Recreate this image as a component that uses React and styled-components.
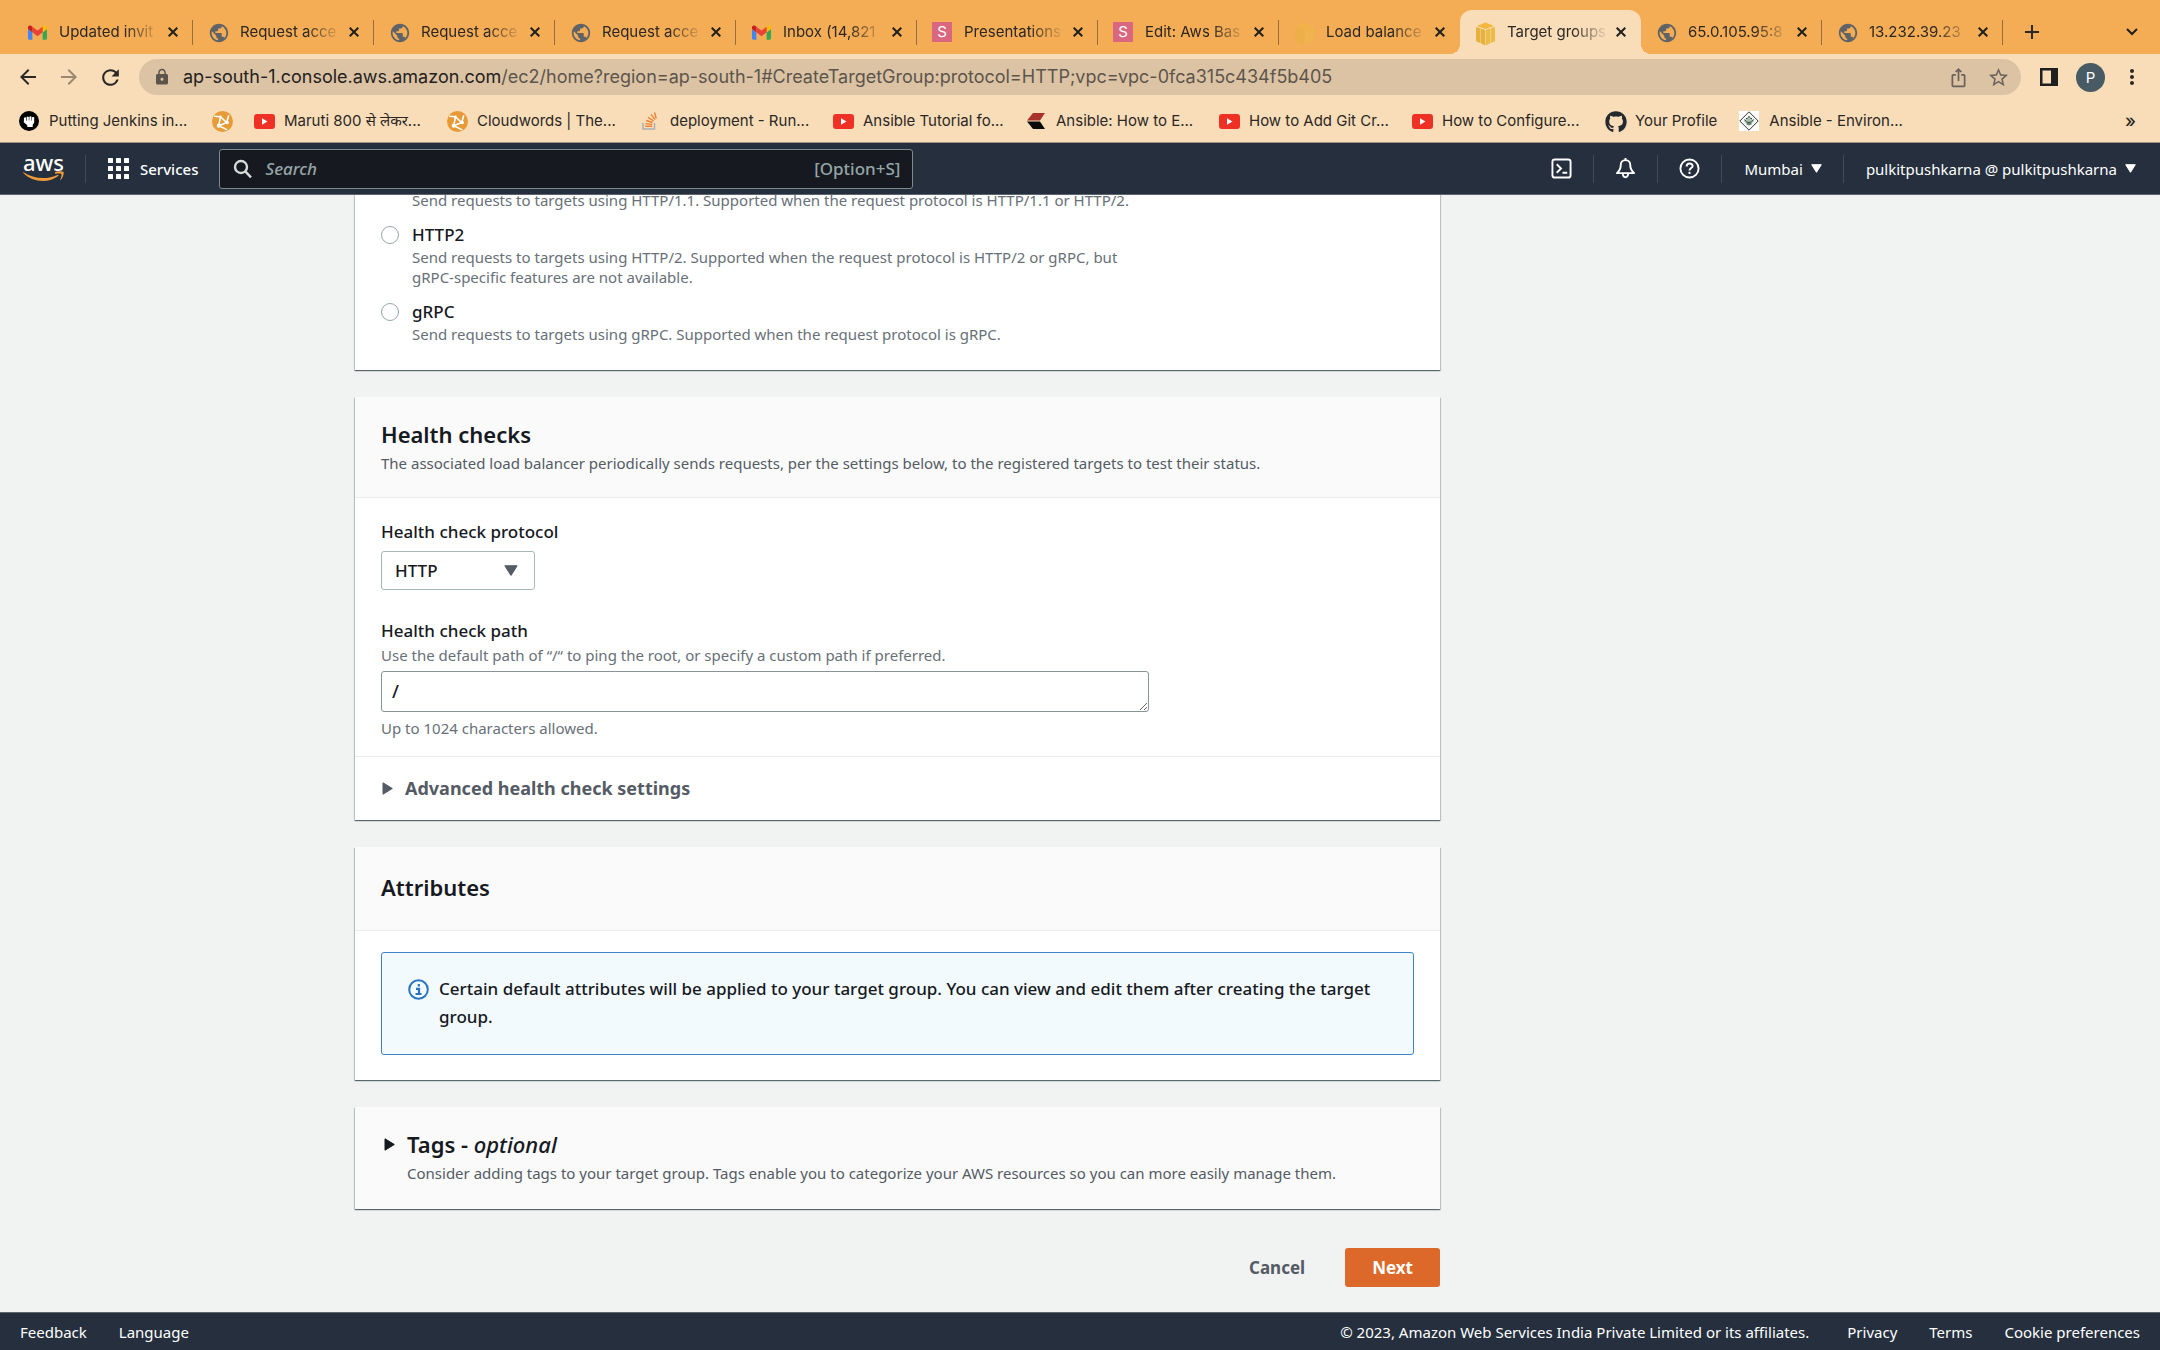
import React from 'react';
import styled, { createGlobalStyle, css } from 'styled-components';
import {
  MdPublic, MdLock, MdArrowBack, MdArrowForward, MdRefresh, MdIosShare,
  MdStarBorder, MdMoreVert, MdAdd,
} from 'react-icons/md';
import { FaGithub } from 'react-icons/fa';

const ember = '"Noto Sans", "Open Sans", "Liberation Sans", sans-serif';
const system = 'Inter, Roboto, "Noto Sans", "Liberation Sans", sans-serif';

const color = {
  strip: '#f5ad55',
  toolbar: '#f9ddb9',
  omnibox: '#dbc3a4',
  chromeText: '#2b2724',
  squid: '#252f3e',
  ink: '#16191f',
  secondary: '#545b64',
  muted: '#687078',
  page: '#f1f3f3',
  line: '#eaeded',
  orange: '#dc6829',
  info: '#2a74bf',
};

const GlobalStyle = createGlobalStyle`
  *, *::before, *::after { box-sizing: border-box; }
  body { margin: 0; }
  button, input, select, textarea { font: inherit; color: inherit; }
  button { border: 0; padding: 0; background: none; cursor: pointer; }
  h2, p { margin: 0; }
`;

const Screen = styled.div`
  display: flex;
  flex-direction: column;
  height: 100vh;
  overflow: hidden;
  font-family: ${ember};
  color: ${color.ink};
`;

/* ---------- Browser chrome ---------- */

const TabStrip = styled.div`
  display: flex;
  align-items: flex-end;
  height: 54px;
  padding: 10px 14px 0 12px;
  background: ${color.strip};
  font: 400 15px/20px ${system};
  color: ${color.chromeText};
`;

const TabItem = styled.div`
  position: relative;
  display: flex;
  align-items: center;
  flex: 0 1 181px;
  min-width: 0;
  height: 44px;
  padding: 0 12px 0 15px;
  gap: 5px;
  ${(p) => p.$divider && css`
    &::after {
      content: '';
      position: absolute;
      right: 0;
      top: 10px;
      width: 1px;
      height: 25px;
      background: #94703f;
    }
  `}
  ${(p) => p.$active && css`
    border-radius: 12px 12px 0 0;
    background: ${color.toolbar};
    &::before, &::after {
      content: '';
      position: absolute;
      bottom: 0;
      width: 10px;
      height: 10px;
    }
    &::before {
      left: -10px;
      background: radial-gradient(circle at 0 0, transparent 10px, ${color.toolbar} 10px);
    }
    &::after {
      right: -10px;
      background: radial-gradient(circle at 100% 0, transparent 10px, ${color.toolbar} 10px);
    }
  `}
`;

const TabTitle = styled.button`
  flex: 1;
  min-width: 0;
  padding-left: 7px;
  overflow: hidden;
  white-space: nowrap;
  text-align: left;
  mask-image: linear-gradient(90deg, #000 68%, transparent 100%);
`;

const IconButton = styled.button`
  display: grid;
  place-items: center;
  flex: none;
  width: ${(p) => p.$size || 28}px;
  height: ${(p) => p.$size || 28}px;
  color: ${(p) => p.$color || color.chromeText};
  font-size: ${(p) => p.$glyph || 24}px;
`;

const FavIcon = styled.span`
  display: grid;
  place-items: center;
  flex: none;
  width: 20px;
  height: 20px;
  font-size: 22px;
  color: ${(p) => p.$color || '#5f6368'};
`;

const LetterIcon = styled.span`
  display: grid;
  place-items: center;
  width: 20px;
  height: 20px;
  background: #d8677f;
  color: #fff;
  font-size: 15px;
`;

const NewTab = styled(IconButton)`
  align-self: center;
  margin-left: 15px;
`;

const TabSearch = styled(IconButton)`
  align-self: center;
  margin-left: auto;
`;

const Toolbar = styled.div`
  display: flex;
  align-items: center;
  height: 46px;
  padding: 0 14px;
  gap: 13px;
  background: ${color.toolbar};
  color: ${color.chromeText};
`;

const Omnibox = styled.div`
  display: flex;
  align-items: center;
  flex: 1;
  min-width: 0;
  height: 36px;
  margin: 0 1px 0 2px;
  padding: 0 9px 0 14px;
  border-radius: 18px;
  background: ${color.omnibox};
  gap: 12px;
  color: #5d554c;
  font: 400 18px/24px ${system};
`;

const Address = styled.div`
  flex: 1;
  min-width: 0;
  overflow: hidden;
  white-space: nowrap;
  strong { font-weight: 400; color: #24211e; }
`;

const Avatar = styled.button`
  width: 29px;
  height: 29px;
  border-radius: 50%;
  background: #485a64;
  color: #fff;
  font: 400 15px/29px ${system};
`;

const Bookmarks = styled.nav`
  display: flex;
  align-items: center;
  height: 43px;
  padding: 0 24px 0 19px;
  gap: 22px;
  background: ${color.toolbar};
  border-bottom: 1px solid #a3937d;
  font: 400 15px/20px ${system};
  color: ${color.chromeText};
`;

const Bookmark = styled.a`
  display: flex;
  align-items: center;
  gap: 10px;
  flex: none;
  color: inherit;
  text-decoration: none;
  white-space: nowrap;
`;

const BookmarkTitle = styled.span`
  width: ${(p) => (p.$short ? 'auto' : '141px')};
`;

const More = styled.button`
  margin-left: auto;
  font-size: 18px;
  font-weight: 500;
  line-height: 20px;
`;

/* ---------- Console header ---------- */

const Header = styled.header`
  display: flex;
  align-items: center;
  flex: none;
  height: 52px;
  padding: 0 24px 0 23px;
  background: ${color.squid};
  border-bottom: 1px solid #5b646f;
  color: #fff;
  font-size: 15px;
  line-height: 20px;
`;

const Logo = styled.a`
  display: flex;
  flex-direction: column;
  align-items: center;
  width: 41px;
  margin-right: 21px;
  padding-bottom: 3px;
  color: #fff;
  text-decoration: none;
  font: 500 22px/18px ${ember};
  svg { display: block; }
`;

const Rule = styled.span`
  flex: none;
  width: 1px;
  height: 28px;
  background: #414b58;
`;

const ServicesButton = styled.button`
  display: flex;
  align-items: center;
  gap: 11px;
  margin: 0 21px 0 22px;
  font-weight: 500;
`;

const SearchBox = styled.label`
  display: flex;
  align-items: center;
  flex: 0 1 694px;
  height: 40px;
  padding: 0 12px 0 13px;
  gap: 12px;
  border: 1px solid #7d8a8c;
  border-radius: 3px;
  background: ${color.ink};
  color: #95a5a6;
  font-size: 17px;
  font-weight: 500;
  line-height: 24px;
`;

const SearchInput = styled.input`
  flex: 1;
  min-width: 0;
  padding: 0;
  border: 0;
  outline: 0;
  background: none;
  color: #fff;
  &::placeholder { color: #95a5a6; font-style: italic; opacity: 1; }
`;

const HeaderTools = styled.div`
  display: flex;
  align-items: center;
  margin-left: auto;
`;

const ToolButton = styled.button`
  display: flex;
  align-items: center;
  justify-content: center;
  gap: 8px;
  padding: 0 21px 0 22px;
  white-space: nowrap;
  &:last-child { padding-right: 0; }
  &[aria-label] { padding: 0 21px; }
`;

/* ---------- Page ---------- */

const Main = styled.main`
  display: grid;
  grid-template-columns: minmax(24px, 355fr) minmax(0, 1085px) minmax(24px, 720fr);
  flex: 1;
  align-content: end;
  min-height: 0;
  overflow: hidden;
  padding-bottom: 25px;
  background: ${color.page};
`;

const Column = styled.div`
  grid-column: 2;
  display: flex;
  flex-direction: column;
  gap: 27px;
`;

const Card = styled.section`
  background: #fff;
  box-shadow: 0 1px 1px 0 rgba(0, 28, 36, 0.5), 1px 1px 1px 0 rgba(0, 28, 36, 0.15),
    -1px 1px 1px 0 rgba(0, 28, 36, 0.15);
`;

const CardHeader = styled.div`
  padding: ${(p) => (p.$roomy ? '25px 26px 28px' : '22px 26px 24px')};
  background: #fafafa;
  border-bottom: 1px solid ${color.line};
`;

const Title = styled.h2`
  font-size: 22px;
  font-weight: 650;
  line-height: 30px;
  em { font-weight: 500; }
`;

const Subtitle = styled.p`
  margin-top: 4px;
  padding-left: ${(p) => (p.$indent ? '26px' : '0')};
  font-size: 15px;
  line-height: 20px;
  color: ${color.secondary};
`;

const CardBody = styled.div`
  display: flex;
  flex-direction: column;
  gap: ${(p) => p.$gap || 0}px;
  padding: ${(p) => p.$pad};
`;

const Option = styled.div`
  display: grid;
  grid-template-columns: 18px minmax(0, 720px);
  column-gap: 13px;
`;

const Radio = styled.input`
  appearance: none;
  width: 18px;
  height: 18px;
  margin: 3px 0 0;
  border: 1px solid #95a5a6;
  border-radius: 50%;
  background: #fff;
`;

const Label = styled.label`
  font-size: 17px;
  font-weight: 500;
  line-height: 24px;
`;

const Hint = styled.p`
  grid-column: 2;
  font-size: 15px;
  line-height: 20px;
  color: ${color.muted};
`;

const Field = styled.div`
  display: flex;
  flex-direction: column;
  align-items: flex-start;
  gap: ${(p) => p.$gap}px;
`;

const FieldHead = styled.div`
  display: flex;
  flex-direction: column;
  gap: 2px;
`;

const SelectWrap = styled.div`
  display: grid;
  align-items: center;
  svg { grid-area: 1 / 1; justify-self: end; margin-right: 17px; pointer-events: none; }
`;

const Select = styled.select`
  grid-area: 1 / 1;
  appearance: none;
  width: 154px;
  height: 39px;
  padding: 0 13px;
  border: 1px solid #aab7b8;
  border-radius: 3px;
  background: #fff;
  font-size: 17px;
  font-weight: 500;
  line-height: 24px;
`;

const PathBox = styled.textarea`
  display: block;
  width: 768px;
  max-width: 100%;
  height: 41px;
  padding: 7px 10px;
  border: 1px solid #879596;
  border-radius: 3px;
  background: #fff;
  font-size: 18px;
  font-weight: 500;
  line-height: 24px;
`;

const Expander = styled.button`
  display: flex;
  align-items: center;
  gap: 12px;
  width: 100%;
  padding: 19px 27px 20px;
  border-top: 1px solid ${color.line};
  color: ${color.secondary};
  font-size: 18px;
  font-weight: 700;
  line-height: 24px;
`;

const TitleToggle = styled.button`
  display: flex;
  align-items: center;
  gap: 12px;
  padding-left: 3px;
`;

const TagsHeader = styled.div`
  padding: 22px 26px;
  padding-bottom: 26px;
  background: #fafafa;
`;

const Alert = styled.div`
  display: flex;
  gap: 10px;
  padding: 22px 26px 23px;
  border: 1px solid #3d83c5;
  border-radius: 3px;
  background: #f2fafd;
  font-size: 17px;
  font-weight: 500;
  line-height: 28px;
  svg { flex: none; margin-top: 4px; }
`;

const Actions = styled.div`
  display: flex;
  justify-content: flex-end;
  gap: 13px;
  padding-top: 12px;
  font-size: 17px;
  font-weight: 700;
  line-height: 24px;
`;

const Action = styled.button`
  height: 39px;
  padding: 0 27px;
  border-radius: 3px;
  background: ${(p) => (p.$primary ? color.orange : 'transparent')};
  color: ${(p) => (p.$primary ? '#fff' : color.secondary)};
`;

const Footer = styled.footer`
  display: flex;
  align-items: center;
  flex: none;
  height: 38px;
  padding: 0 20px;
  gap: 32px;
  background: ${color.squid};
  border-top: 1px solid #5b6668;
  color: #fff;
  font-size: 15px;
  line-height: 20px;
  white-space: nowrap;
  a { color: inherit; text-decoration: none; }
`;

const Copyright = styled.span`
  margin: 0 6px 0 auto;
`;

/* ---------- Drawings ---------- */

const Gmail = () => (
  <svg width="19" height="15" viewBox="0 0 24 18">
    <path fill="#4285f4" d="M1.6 18H5.5V8.7L0 4.5v11.900C0 17.300 .7 18 1.600 18z" />
    <path fill="#34a853" d="M18.500 18h3.900c.9 0 1.600-.7 1.600-1.600V4.500l-5.500 4.200z" />
    <path fill="#fbbc04" d="M18.500 1.700v7L24 4.500V2.400C24 .4 21.700-.7 20 .5z" />
    <path fill="#ea4335" d="M5.500 8.700v-7L12 6.600l6.500-4.900v7L12 13.600z" />
    <path fill="#c5221f" d="M0 2.400v2.100l5.500 4.200v-7L4 .5C2.300-.7 0 .4 0 2.400z" />
  </svg>
);

const Cube = ({ faded }) => (
  <svg width="19" height="24" viewBox="0 0 20 24" opacity={faded ? 0.5 : 1}>
    <path fill="#f2b73c" d="M10 0l9 3.500-9 3.200L1 3.500z" />
    <path fill="#e6b13c" d="M0 4.500l4.500 1.400V21.500L0 19.500zM5 6.100l4.700 1.700V24L5 21.700z" />
    <path fill="#ecbb48" d="M20 4.500l-4.500 1.400V21.500l4.500-2zM15 6.100l-4.700 1.700V24l4.700-2.300z" />
  </svg>
);

const Cross = () => (
  <svg width="10" height="10" viewBox="0 0 10 10" stroke="#1f1f1f" strokeWidth="2">
    <path d="M.7.7l8.600 8.600M9.300.7L.7 9.300" />
  </svg>
);

const Fist = () => (
  <svg width="20" height="20" viewBox="0 0 20 20">
    <circle cx="10" cy="10" r="10" fill="#000" />
    <path fill="#fff" d="M5 6.800q1-1 2-.3V9.700h.6V5.900q1.100-.9 2.200 0v3.700h.5V5.800q1.100-.9 2.200 0v3.900h.5V6.300q1.100-.7 2.200 0v5.200l-1.500 2.500V16H8.300v-1.800L4.800 11.300z" />
  </svg>
);

const Network = () => (
  <svg width="21" height="21" viewBox="0 0 20 20">
    <circle cx="10" cy="10" r="10" fill="#e79a35" />
    <g stroke="#fff" strokeWidth="1.500" fill="none">
      <path d="M2 5l6 .5L14 11l2-7M8 5.500L6.500 14 14 11M6.500 14l8 4" />
    </g>
    <circle cx="6.500" cy="14" r="2" fill="#fff" />
    <circle cx="14.500" cy="11" r="1.600" fill="#fff" />
    <circle cx="8" cy="5.500" r="1.300" fill="#fff" />
  </svg>
);

const Youtube = () => (
  <svg width="21" height="15" viewBox="0 0 21 15">
    <rect width="21" height="15" rx="3" fill="#ee3124" />
    <path fill="#fff" d="M8 4.300v6.400l5.500-3.200z" />
  </svg>
);

const Stack = () => (
  <svg width="16" height="18" viewBox="0 0 16 18">
    <path d="M1 11v6h11.500v-6" fill="none" stroke="#a9b0b5" strokeWidth="1.500" />
    <path d="M3.200 14.300h7M3.400 11.600l6.900.8M4.200 8.500l6.500 2M6 5.300l5.600 3.700M9 2.400l4 5.300M12.600.5l1.600 6" stroke="#ef8236" strokeWidth="1.400" />
  </svg>
);

const Ribbon = () => (
  <svg width="18" height="18" viewBox="0 0 18 18">
    <path fill="#a8322c" d="M6 1h12l-5 7.500H0z" />
    <path fill="#0a0a0a" d="M0 9.500h13L18 17H6z" />
  </svg>
);

const Diamond = () => (
  <svg width="20" height="20" viewBox="0 0 20 20">
    <rect width="20" height="20" fill="#fff" />
    <path d="M10 .8L19.200 10 10 19.200.8 10z" fill="#f4f7f5" stroke="#333" />
    <path d="M10 5L15 10 10 15 5 10z" fill="#a9c0b0" />
    <path d="M5.500 8.500c2 4 7 4 9 0M7 7.500h1.500M11.500 7.500h1.500M7.500 13h5M10 5v2" stroke="#2c4a38" fill="none" />
  </svg>
);

const Smile = () => (
  <svg width="41" height="10" viewBox="0 0 41 10">
    <path fill="#f19b38" d="M.4 1.200C6 4.900 13 7 20 7c5.200 0 10.300-1.200 14.500-3.100.8-.3 1.400.5.7 1.100C31.200 8 25.600 10 20 10 12.400 10 5.400 7.100.2 2c-.4-.4 0-1 .2-.8z" />
    <path fill="#f19b38" d="M32 1.200C34.500-.2 40 .4 40.500 1.100c.6.700-.1 5.400-2.600 7.600-.5.4-.8.2-.6-.3.600-1.400 1.700-4.700 1.100-5.500-.6-.7-4.100-.3-5.700-.2-.7.100-.9-.4-.7-.5z" />
  </svg>
);

const Waffle = () => (
  <svg width="21" height="21" viewBox="0 0 21 21" fill="#fff">
    {[0, 8, 16].map((y) => [0, 8, 16].map((x) => (
      <rect key={`${x}-${y}`} x={x} y={y} width="5" height="5" rx=".5" />
    )))}
  </svg>
);

const Magnifier = () => (
  <svg width="20" height="20" viewBox="0 0 20 20" fill="none" stroke="#d5dbdb" strokeWidth="2.400">
    <circle cx="8" cy="8" r="6" />
    <path d="M12.300 12.300L18 18.300" />
  </svg>
);

const Caret = ({ width = 11, height = 9, fill = '#fff' }) => (
  <svg width={width} height={height} viewBox="0 0 11 9">
    <path fill={fill} stroke={fill} strokeLinejoin="round" d="M.7.7h9.600L5.500 8.300z" />
  </svg>
);

const RightCaret = () => (
  <svg width="11" height="13" viewBox="0 0 11 13">
    <path fill="currentColor" stroke="currentColor" strokeLinejoin="round" d="M1 .8L10.300 6.500 1 12.200z" />
  </svg>
);

const Shell = () => (
  <svg width="21" height="21" viewBox="0 0 22 22" fill="none" stroke="#fff" strokeWidth="2">
    <rect x="1.500" y="1.500" width="19" height="19" rx="2.500" />
    <path d="M6 6.500l4.500 4.500L6 15.500M12 15.500h5" />
  </svg>
);

const Bell = () => (
  <svg width="21" height="21" viewBox="0 0 22 22" fill="none" stroke="#fff" strokeWidth="2">
    <path d="M11 2.200c-3.400 0-5 2.600-5 5.300 0 4-1.500 6-4 8.300h18c-2.500-2.300-4-4.300-4-8.300 0-2.700-1.600-5.300-5-5.300zM8.200 16c0 5.500 5.600 5.500 5.600 0M11 0v2.500" strokeLinejoin="round" />
  </svg>
);

const Help = () => (
  <svg width="21" height="21" viewBox="0 0 22 22" fill="none" stroke="#fff" strokeWidth="2">
    <circle cx="11" cy="11" r="9.500" />
    <path d="M8 9c0-4.400 6.300-4 6.300-.7 0 2.200-3.300 2.400-3.300 4.900M11 14.500v2.200" />
  </svg>
);

const Info = () => (
  <svg width="21" height="21" viewBox="0 0 21 21" fill="none" stroke={color.info} strokeWidth="2">
    <circle cx="10.500" cy="10.500" r="9.300" />
    <path d="M10.800 5v2.500M8 9.800h3v5M7.500 15h6" strokeWidth="2.200" />
  </svg>
);

const Panel = () => (
  <svg width="18" height="18" viewBox="0 0 18 18">
    <path fill="#1f1f1f" fillRule="evenodd" d="M0 0h18v18H0zM2.500 2.500v13h8.500v-13z" />
  </svg>
);

const Chevron = () => (
  <svg width="12" height="8" viewBox="0 0 12 8" fill="none" stroke="#1f1f1f" strokeWidth="2">
    <path d="M1 1l5 5 5-5" />
  </svg>
);

/* ---------- Data ---------- */

const globe = <MdPublic />;
const tabs = [
  { title: 'Updated invit', icon: <Gmail />, divider: true },
  { title: 'Request acce', icon: globe, divider: true },
  { title: 'Request acce', icon: globe, divider: true },
  { title: 'Request acce', icon: globe, divider: true },
  { title: 'Inbox (14,821', icon: <Gmail />, divider: true },
  { title: 'Presentations', icon: <LetterIcon>S</LetterIcon>, divider: true },
  { title: 'Edit: Aws Bas', icon: <LetterIcon>S</LetterIcon>, divider: true },
  { title: 'Load balance', icon: <Cube faded /> },
  { title: 'Target groups', icon: <Cube />, active: true },
  { title: '65.0.105.95:8', icon: globe, divider: true },
  { title: '13.232.39.23', icon: globe, divider: true },
];

const bookmarks = [
  { title: 'Putting Jenkins in...', icon: <Fist /> },
  { icon: <Network /> },
  { title: 'Maruti 800 से लेकर...', icon: <Youtube /> },
  { title: 'Cloudwords | The...', icon: <Network /> },
  { title: 'deployment - Run...', icon: <Stack /> },
  { title: 'Ansible Tutorial fo...', icon: <Youtube /> },
  { title: 'Ansible: How to E...', icon: <Ribbon /> },
  { title: 'How to Add Git Cr...', icon: <Youtube /> },
  { title: 'How to Configure...', icon: <Youtube /> },
  { title: 'Your Profile', icon: <FaGithub />, short: true },
  { title: 'Ansible - Environ...', icon: <Diamond /> },
];

function BrowserChrome() {
  return (
    <>
      <TabStrip>
        {tabs.map((t, i) => (
          <TabItem key={i} $active={t.active} $divider={t.divider}>
            <FavIcon>{t.icon}</FavIcon>
            <TabTitle>{t.title}</TabTitle>
            <IconButton $size={16} aria-label="Close tab"><Cross /></IconButton>
          </TabItem>
        ))}
        <NewTab aria-label="New tab"><MdAdd /></NewTab>
        <TabSearch aria-label="Search tabs"><Chevron /></TabSearch>
      </TabStrip>
      <Toolbar>
        <IconButton aria-label="Back"><MdArrowBack /></IconButton>
        <IconButton $color="#9a8970" aria-label="Forward"><MdArrowForward /></IconButton>
        <IconButton $glyph={25} aria-label="Reload"><MdRefresh /></IconButton>
        <Omnibox>
          <MdLock />
          <Address role="textbox" aria-label="Address">
            <strong>ap-south-1.console.aws.amazon.com</strong>
            /ec2/home?region=ap-south-1#CreateTargetGroup:protocol=HTTP;vpc=vpc-0fca315c434f5b405
          </Address>
          <IconButton $glyph={21} $color="#6b6259" aria-label="Share"><MdIosShare /></IconButton>
          <IconButton $glyph={23} $color="#6b6259" aria-label="Bookmark"><MdStarBorder /></IconButton>
        </Omnibox>
        <IconButton aria-label="Side panel"><Panel /></IconButton>
        <Avatar>P</Avatar>
        <IconButton aria-label="Menu"><MdMoreVert /></IconButton>
      </Toolbar>
      <Bookmarks>
        {bookmarks.map((b, i) => (
          <Bookmark key={i} href="#">
            <FavIcon $color="#24292e">{b.icon}</FavIcon>
            {b.title && <BookmarkTitle $short={b.short}>{b.title}</BookmarkTitle>}
          </Bookmark>
        ))}
        <More>»</More>
      </Bookmarks>
    </>
  );
}

function ConsoleHeader() {
  return (
    <Header>
      <Logo href="#">aws<Smile /></Logo>
      <Rule />
      <ServicesButton><Waffle />Services</ServicesButton>
      <SearchBox>
        <Magnifier />
        <SearchInput type="text" placeholder="Search" aria-label="Search" />
        <span>[Option+S]</span>
      </SearchBox>
      <HeaderTools>
        <ToolButton aria-label="CloudShell"><Shell /></ToolButton>
        <Rule />
        <ToolButton aria-label="Notifications"><Bell /></ToolButton>
        <Rule />
        <ToolButton aria-label="Help"><Help /></ToolButton>
        <Rule />
        <ToolButton>Mumbai<Caret /></ToolButton>
        <Rule />
        <ToolButton>pulkitpushkarna @ pulkitpushkarna<Caret /></ToolButton>
      </HeaderTools>
    </Header>
  );
}

export default function App() {
  return (
    <Screen>
      <GlobalStyle />
      <BrowserChrome />
      <ConsoleHeader />
      <Main>
        <Column>
          <Card>
            <CardBody $gap={13} $pad="0 26px 26px">
              <Option>
                <Hint>Send requests to targets using HTTP/1.1. Supported when the request protocol is HTTP/1.1 or HTTP/2.</Hint>
              </Option>
              <Option>
                <Radio type="radio" name="version" id="http2" />
                <Label htmlFor="http2">HTTP2</Label>
                <Hint>Send requests to targets using HTTP/2. Supported when the request protocol is HTTP/2 or gRPC, but gRPC-specific features are not available.</Hint>
              </Option>
              <Option>
                <Radio type="radio" name="version" id="grpc" />
                <Label htmlFor="grpc">gRPC</Label>
                <Hint>Send requests to targets using gRPC. Supported when the request protocol is gRPC.</Hint>
              </Option>
            </CardBody>
          </Card>

          <Card>
            <CardHeader>
              <Title>Health checks</Title>
              <Subtitle>The associated load balancer periodically sends requests, per the settings below, to the registered targets to test their status.</Subtitle>
            </CardHeader>
            <CardBody $gap={29} $pad="22px 26px 18px">
              <Field $gap={7}>
                <Label htmlFor="protocol">Health check protocol</Label>
                <SelectWrap>
                  <Select id="protocol" defaultValue="HTTP"><option>HTTP</option></Select>
                  <Caret width={14} height={11} fill={color.secondary} />
                </SelectWrap>
              </Field>
              <Field $gap={6}>
                <FieldHead>
                  <Label htmlFor="path">Health check path</Label>
                  <Hint>Use the default path of “/“ to ping the root, or specify a custom path if preferred.</Hint>
                </FieldHead>
                <PathBox id="path" rows={1} defaultValue="/" />
                <Hint>Up to 1024 characters allowed.</Hint>
              </Field>
            </CardBody>
            <Expander aria-expanded="false"><RightCaret />Advanced health check settings</Expander>
          </Card>

          <Card>
            <CardHeader $roomy>
              <Title>Attributes</Title>
            </CardHeader>
            <CardBody $pad="21px 26px 25px">
              <Alert>
                <Info />
                <span>Certain default attributes will be applied to your target group. You can view and edit them after creating the target group.</span>
              </Alert>
            </CardBody>
          </Card>

          <Card>
            <TagsHeader>
              <TitleToggle aria-expanded="false">
                <RightCaret />
                <Title as="span">Tags - <em>optional</em></Title>
              </TitleToggle>
              <Subtitle $indent>Consider adding tags to your target group. Tags enable you to categorize your AWS resources so you can more easily manage them.</Subtitle>
            </TagsHeader>
          </Card>

          <Actions>
            <Action>Cancel</Action>
            <Action $primary>Next</Action>
          </Actions>
        </Column>
      </Main>
      <Footer>
        <a href="#">Feedback</a>
        <a href="#">Language</a>
        <Copyright>© 2023, Amazon Web Services India Private Limited or its affiliates.</Copyright>
        <a href="#">Privacy</a>
        <a href="#">Terms</a>
        <a href="#">Cookie preferences</a>
      </Footer>
    </Screen>
  );
}
